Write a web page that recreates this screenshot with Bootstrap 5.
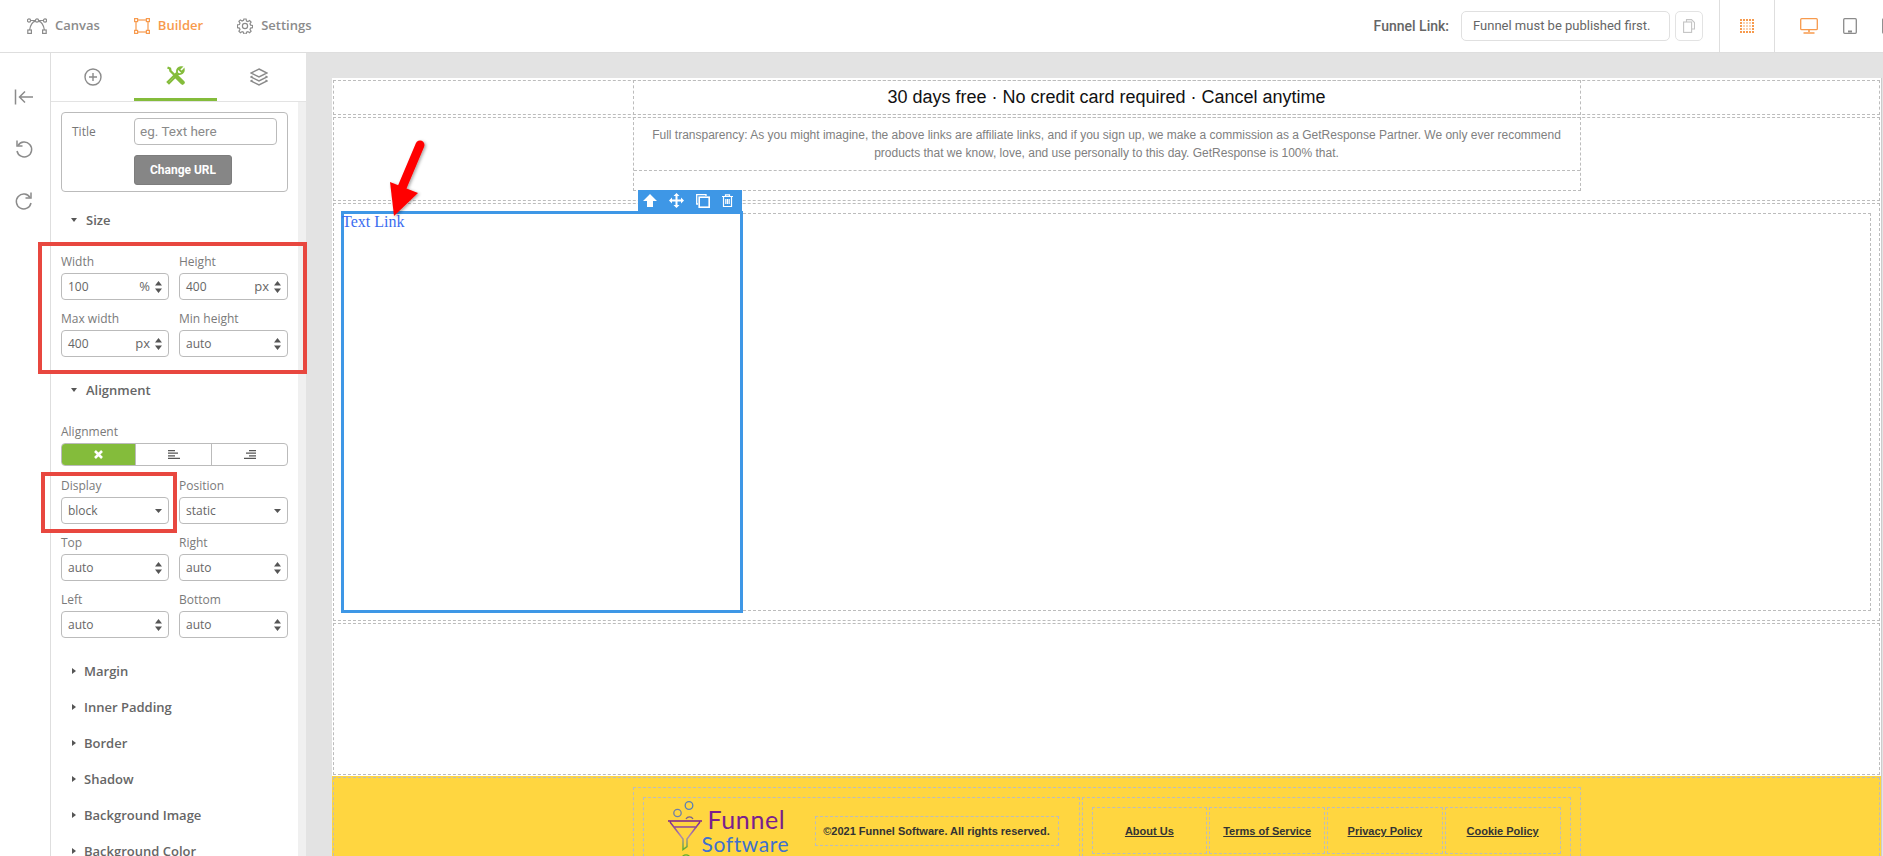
<!DOCTYPE html>
<html lang="en">
<head>
<meta charset="utf-8">
<title>Funnel Builder</title>
<link href="https://cdn.jsdelivr.net/npm/bootstrap@5.3.0/dist/css/bootstrap.min.css" rel="stylesheet">
<style>
html,body{height:856px;overflow:hidden;background:#fff;}
body{position:relative;font-family:"Open Sans",sans-serif;font-size:12px;color:#666;width:1883px;}
.topbar{height:53px;border-bottom:1px solid #dedede;padding-left:27px;overflow:hidden;}
.tnav{font-size:13px;font-weight:600;color:#8b8b8b;margin-right:34px;gap:8px;}
.tnav.on{color:#f79a4d;}
.linklabel{font-family:Roboto,sans-serif;font-size:14px;font-weight:500;color:#666;margin-right:12px;}
.linkbox{font-family:Roboto,sans-serif;font-size:13px;color:#666;width:209px;height:30px;border:1px solid #e0e0e0;border-radius:5px;padding-left:11px;margin-right:5px;}
.copybtn{width:28px;height:30px;border:1px solid #e3e3e3;border-radius:5px;margin-right:16px;}
.tcell{width:56px;height:52px;border-left:1px solid #dedede;border-right:1px solid #dedede;margin-right:25px;}
.devices{gap:25px;flex:none;margin-right:-9px;}
.workarea{height:803px;}
.rail{width:51px;border-right:1px solid #dedede;flex:none;padding:35px 3px 0 0;gap:32.5px;}
.panel{width:255px;flex:none;overflow:hidden;}
.tabsrow{height:49px;border-bottom:1px solid #e3e3e3;}
.tabcell{width:83px;height:48px;}
.tabcell.on{border-bottom:3px solid #84bc3b;}
.panelbody{flex:1;min-height:0;}
.scrolltrack{width:8px;background:#f0f0f0;flex:none;}
.formcol{flex:1;padding:10px 10px 0;min-width:0;}
.titlebox{height:80px;border:1px solid #bbb;border-radius:4px;padding:5px 10px;}
.titlelabel{width:62px;line-height:27px;color:#777;}
.titleinput{width:143px;height:27px;border:1px solid #bbb;border-radius:4px;font-family:Roboto,sans-serif;font-size:13.500px;color:#8a8a8a;padding-left:5px;line-height:25px;}
.urlbtn{width:98px;height:30px;margin:10px 0 0 62px;background:#868686;border:1px solid #7d7d7d;border-radius:3px;color:#fff;font-family:Roboto,sans-serif;font-size:12px;font-weight:700;line-height:28px;text-align:center;}
.sechead{height:20px;line-height:20px;font-size:13px;font-weight:600;color:#666;margin-top:23px;padding-left:10px;gap:9px;}
.sechead.first{margin-top:18px;}
.fieldgrid{display:grid;grid-template-columns:108px 109px;column-gap:10px;row-gap:10px;}
.flabel{height:18px;line-height:18px;margin-bottom:2px;color:#7a7a7a;}
.fld{height:27px;border:1px solid #bbb;border-radius:4px;padding:0 6px;color:#666;line-height:25px;}
.fld .unit{margin-left:auto;margin-right:5px;font-size:13px;}
.fld svg{flex:none;margin-left:auto;}
.fld .unit + svg{margin-left:0;}
.fgap{margin-top:23px;}
.fgap2{margin-top:11px;}
.alignbar{height:23px;border:1px solid #bbb;border-radius:4px;overflow:hidden;}
.alignbar>div{height:100%;}
.alignbar>div+div{border-left:1px solid #bbb;}
.alignon{width:73px;background:#84bc3b;}
.alignoff{flex:1;}
.collapserow{height:36px;line-height:36px;font-size:13px;font-weight:600;color:#666;padding-left:11px;gap:8px;}
.collapselist{margin-top:15px;}
.stage{flex:1;background:#e3e3e3;padding:25px 1px 0 26px;min-width:0;overflow:hidden;}
.sheet{background:#fff;height:100%;padding:2px 1px 0 1px;overflow:hidden;border-right:1px solid #ccc;}
.dash{border:1px dashed #bcbcbc;}
.secrow{margin-bottom:2px;}
.secA{height:35px;}
.secB{height:84px;}
.secC{height:418px;padding:9px 8px 0 9px;}
.secD{height:152px;}
.midcol{width:948px;margin:-1px auto 0;}
.colA{height:35px;text-align:center;font-family:"Liberation Sans",sans-serif;font-size:18px;color:#111;line-height:32px;}
.colB{height:74px;}
.noteblock{height:53px;border-bottom:1px dashed #bcbcbc;padding:8px 12px 0;text-align:center;font-family:"Liberation Sans",sans-serif;font-size:12px;line-height:18px;color:#808080;}
.dropzone{height:398px;}
.picked{position:relative;width:402px;height:402px;margin:-3px 0 0 -3px;border:3px solid #3e97e6;}
.picked a{display:block;margin:-1px 0 0 -2px;font-family:"Liberation Serif",serif;font-size:16px;line-height:18px;color:#3a6cf0;text-decoration:none;}
.picktools{position:absolute;top:-24px;right:-2px;width:104px;height:24px;background:#3e97e6;padding:0 0 3px 5px;gap:12px;}
.yellowband{background:#ffd640;margin:-1px -1px 0;padding-top:1px;height:100px;}
.yellowinner{height:99px;margin:0 1px;}
.footcol{width:948px;height:90px;margin:9px auto 0;padding:9px;}
.footwrap{gap:2px;height:70px;}
.footleft{width:437px;padding-left:24px;position:relative;}
.logowrap{width:147px;flex:none;height:60px;overflow:visible;margin-top:-2px;}
.logotext{margin-left:4px;padding-top:5px;font-family:Lato,sans-serif;}
.logoA{display:block;font-size:25px;color:#7a1f8e;line-height:27px;letter-spacing:.6px;}
.logoB{display:block;font-size:21px;color:#4070cf;line-height:22px;margin-left:-6px;letter-spacing:.6px;}
.copybox{width:244px;height:30px;margin-top:-3px;font-family:"Liberation Sans",sans-serif;font-size:11px;font-weight:700;color:#333;line-height:28px;text-align:center;}
.footright{flex:1;padding:9px;gap:2px;}
.footcell{flex:1;height:47px;padding-top:2px;font-family:"Liberation Sans",sans-serif;font-size:11px;font-weight:700;}
.footcell a{color:#333;text-decoration:underline;}
.redbox{position:absolute;border:4px solid #e8473f;pointer-events:none;}
.redA{left:38px;top:242px;width:269px;height:132px;}
.redB{left:41px;top:472px;width:136px;height:61px;}
.pointer{position:absolute;left:380px;top:130px;}
</style>
</head>
<body>
<header class="topbar d-flex align-items-center">
  <div class="tnav d-flex align-items-center">
    <svg width="20" height="16" viewBox="0 0 20 16" fill="none" stroke="#8b8b8b" stroke-width="1.2"><circle cx="2" cy="2.5" r="1.6"/><circle cx="10" cy="2.5" r="1.6"/><circle cx="18" cy="2.5" r="1.6"/><path d="M3.6 2.5h4.8M11.6 2.5h4.8M2.6 12C3.5 7 6 3.6 8.6 3.2M17.4 12C16.500 7 14 3.6 11.400 3.200"/><rect x=".8" y="12" width="3.6" height="3.4"/><rect x="15.6" y="12" width="3.6" height="3.4"/></svg>
    <span>Canvas</span>
  </div>
  <div class="tnav on d-flex align-items-center">
    <svg width="16" height="16" viewBox="0 0 16 16" fill="none" stroke="#f79a4d" stroke-width="1.2"><rect x="2" y="2" width="12" height="12"/><rect x=".6" y=".6" width="3" height="3" fill="#fff"/><rect x="12.4" y=".6" width="3" height="3" fill="#fff"/><rect x=".6" y="12.4" width="3" height="3" fill="#fff"/><rect x="12.4" y="12.4" width="3" height="3" fill="#fff"/></svg>
    <span>Builder</span>
  </div>
  <div class="tnav d-flex align-items-center">
    <svg width="16" height="16" viewBox="0 0 16 16" fill="none" stroke="#8b8b8b" stroke-width="1.2"><circle cx="8" cy="8" r="2.6"/><path d="M6.900 1h2.200l.4 2 1.400.6 1.700-1.100 1.500 1.500-1.100 1.700.6 1.400 2 .4v2.200l-2 .4-.6 1.400 1.100 1.700-1.500 1.500-1.700-1.100-1.400.6-.4 2H6.900l-.4-2-1.400-.6-1.700 1.100-1.500-1.500 1.100-1.700-.6-1.400-2-.4V6.900l2-.4.6-1.400L1.900 3.400 3.400 1.900l1.700 1.100 1.400-.6z"/></svg>
    <span>Settings</span>
  </div>
  <div class="ms-auto d-flex align-items-center">
    <span class="linklabel">Funnel Link:</span>
    <div class="linkbox d-flex align-items-center">Funnel must be published first.</div>
    <div class="copybtn d-flex align-items-center justify-content-center">
      <svg width="12" height="14" viewBox="0 0 12 14" fill="none" stroke="#c4c4c4" stroke-width="1.100"><path d="M3.500 3V.6h5l3 3V10H8.500"/><rect x=".6" y="3" width="8" height="10.400"/></svg>
    </div>
    <div class="tcell d-flex align-items-center justify-content-center">
      <svg width="14" height="14" viewBox="0 0 14 14" fill="#f79a4d"><rect x="0" y="0" width="2" height="2"/><rect x="3" y="0" width="2" height="2"/><rect x="6" y="0" width="2" height="2"/><rect x="9" y="0" width="2" height="2"/><rect x="12" y="0" width="2" height="2"/><rect x="0" y="3" width="2" height="2"/><rect x="12" y="3" width="2" height="2"/><rect x="0" y="6" width="2" height="2"/><rect x="12" y="6" width="2" height="2"/><rect x="0" y="9" width="2" height="2"/><rect x="12" y="9" width="2" height="2"/><rect x="0" y="12" width="2" height="2"/><rect x="3" y="12" width="2" height="2"/><rect x="6" y="12" width="2" height="2"/><rect x="9" y="12" width="2" height="2"/><rect x="12" y="12" width="2" height="2"/><rect x="3" y="3" width="2" height="2" opacity=".45"/><rect x="6" y="3" width="2" height="2" opacity=".45"/><rect x="9" y="3" width="2" height="2" opacity=".45"/><rect x="3" y="6" width="2" height="2" opacity=".45"/><rect x="6" y="6" width="2" height="2" opacity=".45"/><rect x="9" y="6" width="2" height="2" opacity=".45"/><rect x="3" y="9" width="2" height="2" opacity=".45"/><rect x="6" y="9" width="2" height="2" opacity=".45"/><rect x="9" y="9" width="2" height="2" opacity=".45"/></svg>
    </div>
    <div class="devices d-flex align-items-center">
      <svg width="18" height="16" viewBox="0 0 18 16" fill="none" stroke="#f79a4d" stroke-width="1.300"><rect x=".7" y=".7" width="16.600" height="11" rx="1"/><path d="M9 12v2M3.500 15h11" stroke-width="1.600"/></svg>
      <svg width="14" height="16" viewBox="0 0 14 16" fill="none" stroke="#8b8b8b" stroke-width="1.300"><rect x=".7" y=".7" width="12.600" height="14.600" rx="1"/><path d="M5 13.500h4" stroke-width="2"/></svg>
      <svg width="10" height="16" viewBox="0 0 10 16" fill="none" stroke="#8b8b8b" stroke-width="1.300"><rect x=".7" y=".7" width="8.600" height="14.600" rx="1"/></svg>
    </div>
  </div>
</header>

<div class="workarea d-flex">
  <aside class="rail d-flex flex-column align-items-center">
    <svg width="20" height="18" viewBox="0 0 20 18" fill="none" stroke="#8b8b8b" stroke-width="1.500"><path d="M1.500 1.500v15M19 9H6M11 3.500 5.500 9l5.500 5.500"/></svg>
    <svg width="20" height="20" viewBox="0 0 20 20" fill="none" stroke="#8b8b8b" stroke-width="1.500"><path d="M4 6.500A7.400 7.400 0 1 1 3 12"/><path d="M3 1.500v5.500h5.500"/></svg>
    <svg width="20" height="20" viewBox="0 0 20 20" fill="none" stroke="#8b8b8b" stroke-width="1.500"><path d="M16 6.500A7.400 7.400 0 1 0 17 12"/><path d="M17 1.500v5.500h-5.500"/></svg>
  </aside>
  <section class="panel d-flex flex-column">
    <div class="tabsrow d-flex flex-none">
      <div class="tabcell d-flex align-items-center justify-content-center">
        <svg width="18" height="18" viewBox="0 0 18 18" fill="none" stroke="#8b8b8b" stroke-width="1.400"><circle cx="9" cy="9" r="8"/><path d="M9 5v8M5 9h8"/></svg>
      </div>
      <div class="tabcell on d-flex align-items-center justify-content-center">
        <svg width="19" height="19" viewBox="0 0 19 19" fill="none" stroke="#84bc3b"><path d="M1.500 1.500 4 2.500 4.500 5 10.500 11" stroke-width="2.400"/><path d="M10.500 10.500 16.500 16.500" stroke-width="4.500" stroke-linecap="round"/><path d="M15.500 1.200a4 4 0 0 0-4.300 5.300L1.500 16l1.500 1.500 9.500-9.700a4 4 0 0 0 5.300-4.300L15.500 6 13 3.500z" stroke-width="1.800"/></svg>
      </div>
      <div class="tabcell d-flex align-items-center justify-content-center">
        <svg width="18" height="18" viewBox="0 0 18 18" fill="none" stroke="#8b8b8b" stroke-width="1.400"><path d="M9 1 17 5 9 9 1 5z"/><path d="M2.500 8 1 9l8 4 8-4-1.500-1"/><path d="M2.500 12 1 13l8 4 8-4-1.500-1"/></svg>
      </div>
    </div>
    <div class="panelbody d-flex">
      <div class="formcol">
        <div class="titlebox">
          <div class="d-flex">
            <span class="titlelabel">Title</span>
            <div class="titleinput">eg. Text here</div>
          </div>
          <div class="urlbtn">Change URL</div>
        </div>

        <div class="sechead first d-flex align-items-center"><svg width="6" height="4" viewBox="0 0 6 4" fill="#555"><path d="M0 0h6L3 4z"/></svg><span>Size</span></div>
        <div class="fieldgrid fgap">
          <div><div class="flabel">Width</div><div class="fld d-flex align-items-center"><span>100</span><span class="unit">%</span><svg width="7" height="12" viewBox="0 0 7 12" fill="#555"><path d="M3.500 0 7 4.500H0zM3.500 12 0 7.500h7z"/></svg></div></div>
          <div><div class="flabel">Height</div><div class="fld d-flex align-items-center"><span>400</span><span class="unit">px</span><svg width="7" height="12" viewBox="0 0 7 12" fill="#555"><path d="M3.500 0 7 4.500H0zM3.500 12 0 7.500h7z"/></svg></div></div>
          <div><div class="flabel">Max width</div><div class="fld d-flex align-items-center"><span>400</span><span class="unit">px</span><svg width="7" height="12" viewBox="0 0 7 12" fill="#555"><path d="M3.500 0 7 4.500H0zM3.500 12 0 7.500h7z"/></svg></div></div>
          <div><div class="flabel">Min height</div><div class="fld d-flex align-items-center"><span>auto</span><svg width="7" height="12" viewBox="0 0 7 12" fill="#555"><path d="M3.500 0 7 4.500H0zM3.500 12 0 7.500h7z"/></svg></div></div>
        </div>

        <div class="sechead d-flex align-items-center"><svg width="6" height="4" viewBox="0 0 6 4" fill="#555"><path d="M0 0h6L3 4z"/></svg><span>Alignment</span></div>
        <div class="flabel fgap">Alignment</div>
        <div class="alignbar d-flex">
          <div class="alignon d-flex align-items-center justify-content-center"><svg width="9" height="9" viewBox="0 0 9 9" stroke="#fff" stroke-width="2.600"><path d="M1 1l7 7M8 1 1 8"/></svg></div>
          <div class="alignoff d-flex align-items-center justify-content-center"><svg width="12" height="9" viewBox="0 0 12 9" stroke="#555" stroke-width="1.200"><path d="M0 .6h7M0 3.200h10M0 5.800h7M0 8.400h12"/></svg></div>
          <div class="alignoff d-flex align-items-center justify-content-center"><svg width="12" height="9" viewBox="0 0 12 9" stroke="#555" stroke-width="1.200"><path d="M5 .6h7M2 3.200h10M5 5.800h7M0 8.400h12"/></svg></div>
        </div>
        <div class="fieldgrid fgap2">
          <div><div class="flabel">Display</div><div class="fld d-flex align-items-center"><span>block</span><svg width="7" height="4" viewBox="0 0 7 4" fill="#555"><path d="M0 0h7L3.500 4z"/></svg></div></div>
          <div><div class="flabel">Position</div><div class="fld d-flex align-items-center"><span>static</span><svg width="7" height="4" viewBox="0 0 7 4" fill="#555"><path d="M0 0h7L3.500 4z"/></svg></div></div>
          <div><div class="flabel">Top</div><div class="fld d-flex align-items-center"><span>auto</span><svg width="7" height="12" viewBox="0 0 7 12" fill="#555"><path d="M3.500 0 7 4.500H0zM3.500 12 0 7.500h7z"/></svg></div></div>
          <div><div class="flabel">Right</div><div class="fld d-flex align-items-center"><span>auto</span><svg width="7" height="12" viewBox="0 0 7 12" fill="#555"><path d="M3.500 0 7 4.500H0zM3.500 12 0 7.500h7z"/></svg></div></div>
          <div><div class="flabel">Left</div><div class="fld d-flex align-items-center"><span>auto</span><svg width="7" height="12" viewBox="0 0 7 12" fill="#555"><path d="M3.500 0 7 4.500H0zM3.500 12 0 7.500h7z"/></svg></div></div>
          <div><div class="flabel">Bottom</div><div class="fld d-flex align-items-center"><span>auto</span><svg width="7" height="12" viewBox="0 0 7 12" fill="#555"><path d="M3.500 0 7 4.500H0zM3.500 12 0 7.500h7z"/></svg></div></div>
        </div>

        <div class="collapselist">
          <div class="collapserow d-flex align-items-center"><svg width="4" height="6" viewBox="0 0 4 6" fill="#555"><path d="M0 0l4 3-4 3z"/></svg><span>Margin</span></div>
          <div class="collapserow d-flex align-items-center"><svg width="4" height="6" viewBox="0 0 4 6" fill="#555"><path d="M0 0l4 3-4 3z"/></svg><span>Inner Padding</span></div>
          <div class="collapserow d-flex align-items-center"><svg width="4" height="6" viewBox="0 0 4 6" fill="#555"><path d="M0 0l4 3-4 3z"/></svg><span>Border</span></div>
          <div class="collapserow d-flex align-items-center"><svg width="4" height="6" viewBox="0 0 4 6" fill="#555"><path d="M0 0l4 3-4 3z"/></svg><span>Shadow</span></div>
          <div class="collapserow d-flex align-items-center"><svg width="4" height="6" viewBox="0 0 4 6" fill="#555"><path d="M0 0l4 3-4 3z"/></svg><span>Background Image</span></div>
          <div class="collapserow d-flex align-items-center"><svg width="4" height="6" viewBox="0 0 4 6" fill="#555"><path d="M0 0l4 3-4 3z"/></svg><span>Background Color</span></div>
        </div>
      </div>
      <div class="scrolltrack"></div>
    </div>
  </section>

  <main class="stage">
    <div class="sheet">
      <div class="secrow secA dash"><div class="midcol colA dash">30 days free · No credit card required · Cancel anytime</div></div>
      <div class="secrow secB dash">
        <div class="midcol colB dash">
          <div class="noteblock">Full transparency: As you might imagine, the above links are affiliate links, and if you sign up, we make a commission as a GetResponse Partner. We only ever recommend products that we know, love, and use personally to this day. GetResponse is 100% that.</div>
        </div>
      </div>
      <div class="secrow secC dash">
        <div class="dropzone dash">
          <div class="picked">
            <div class="picktools d-flex align-items-center">
              <svg width="14" height="13" viewBox="0 0 14 13" fill="#fff"><path d="M7 0 14 7h-4v6H4V7H0z"/></svg>
              <svg width="15" height="15" viewBox="0 0 15 15" fill="#fff"><path d="M7.500 0 10.500 3H8.500v3.500H12V4.500l3 3-3 3v-2H8.500V12h2l-3 3-3-3h2V8.500H3v2l-3-3 3-3v2h3.500V3h-2z"/></svg>
              <svg width="14" height="14" viewBox="0 0 14 14" fill="none" stroke="#fff" stroke-width="1.300"><path d="M2 10H.7V.7H10V2"/><rect x="3.200" y="3.200" width="10" height="10" stroke-width="1.600"/></svg>
              <svg width="11" height="13" viewBox="0 0 11 13" fill="none" stroke="#fff" stroke-width="1.200"><path d="M0 2.500h11M3.500 2.500V.8h4v1.700M1.500 2.500v10h8v-10M3.800 5v5M5.500 5v5M7.200 5v5"/></svg>
            </div>
            <a href="#">Text Link</a>
          </div>
        </div>
      </div>
      <div class="secrow secD dash"></div>
      <div class="yellowband">
        <div class="yellowinner dash">
          <div class="footcol dash">
            <div class="footwrap d-flex">
              <div class="footleft dash d-flex align-items-center">
                <div class="logowrap d-flex">
                  <svg width="36" height="62" viewBox="0 0 36 62" fill="none" stroke-width="1.300" class="flex-none"><defs><linearGradient id="fg" x1="0" y1="0" x2="0" y2="1"><stop offset="0" stop-color="#7a1f8e"/><stop offset=".55" stop-color="#b08ab0"/><stop offset="1" stop-color="#5fae2e"/></linearGradient></defs><circle cx="21" cy="4.500" r="3.800" stroke="#5a7fb5"/><circle cx="9.500" cy="12" r="3.700" stroke="#6f7fa8"/><path d="M18 18a4 4 0 0 1 7 0" stroke="#7a5f8e"/><path d="M0 20h34M2 21 15 38v10.500l4-3V38L32 21M6 26h23" stroke="url(#fg)" stroke-width="1.500"/><circle cx="18" cy="58" r="4.200" stroke="#5fae2e"/></svg>
                  <div class="logotext"><span class="logoA">Funnel</span><span class="logoB">Software</span></div>
                </div>
                <div class="copybox dash">©2021 Funnel Software. All rights reserved.</div>
              </div>
              <div class="footright dash d-flex">
                <div class="footcell dash d-flex align-items-center justify-content-center"><a href="#">About Us</a></div>
                <div class="footcell dash d-flex align-items-center justify-content-center"><a href="#">Terms of Service</a></div>
                <div class="footcell dash d-flex align-items-center justify-content-center"><a href="#">Privacy Policy</a></div>
                <div class="footcell dash d-flex align-items-center justify-content-center"><a href="#">Cookie Policy</a></div>
              </div>
            </div>
          </div>
        </div>
      </div>
    </div>
  </main>
</div>

<div class="redbox redA"></div>
<div class="redbox redB"></div>
<svg class="pointer" width="50" height="92" viewBox="0 0 50 92"><defs><filter id="sh" x="-30%" y="-30%" width="160%" height="160%"><feDropShadow dx="1.500" dy="1" stdDeviation="1.500" flood-color="#000" flood-opacity=".35"/></filter></defs><g filter="url(#sh)"><path d="M40 15 21 60" stroke="#f00" stroke-width="9" stroke-linecap="round"/><path d="M10 52 38 63 14 86z" fill="#f00"/></g></svg>
</body>
</html>
